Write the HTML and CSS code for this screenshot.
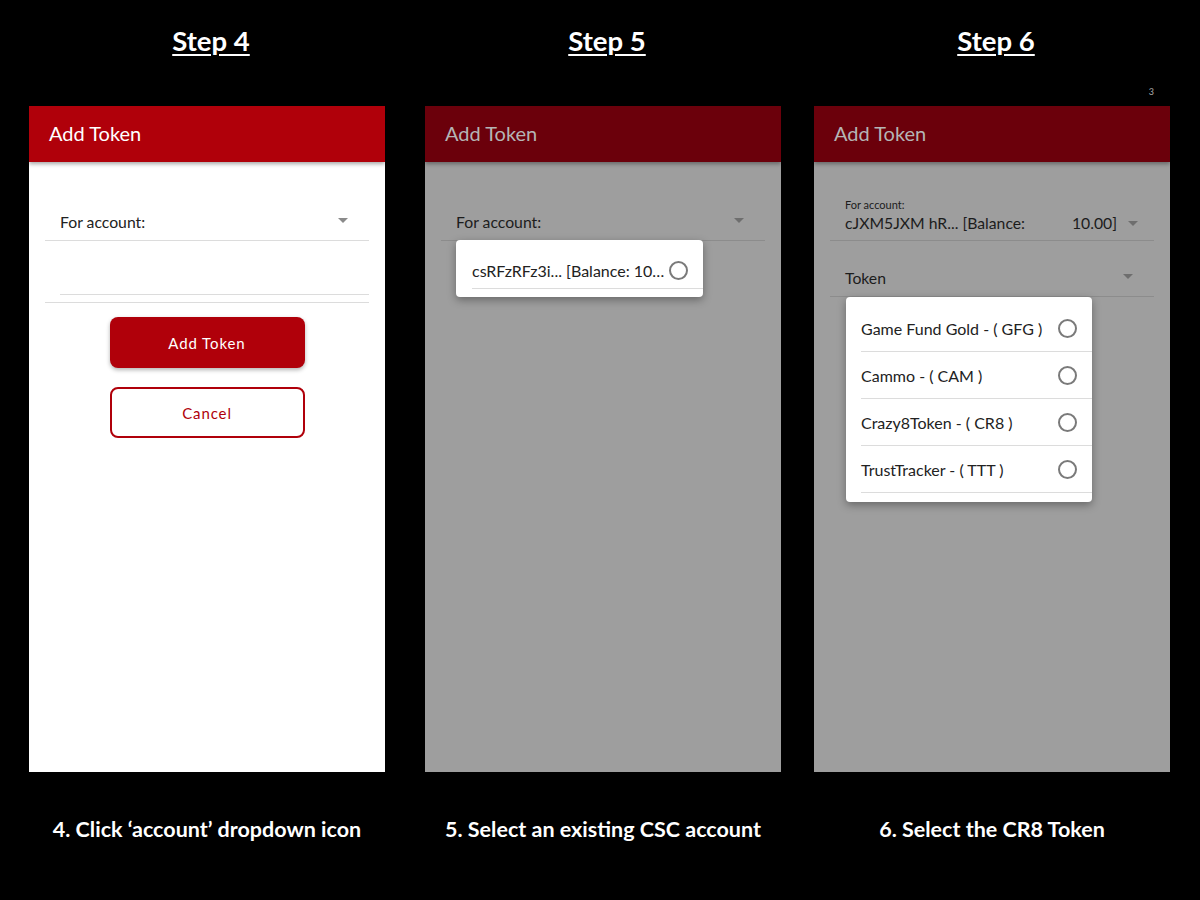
FILE: index.html
```html
<!DOCTYPE html>
<html>

<head>
    <title>Add Token - Steps 4 to 6</title>
    <meta charset="UTF-8">
    <meta name="viewport" content="width=device-width, initial-scale=1.0">
    <link rel="stylesheet" href="styles.css">
</head>

<body>
    <main class="steps">
        <!-- step 4: empty form -->
        <section class="step">
            <div class="step-head"><h2>Step 4</h2></div>
            <div class="phone">
                <header class="app-bar">Add Token</header>
                <div class="app-body">
                    <div class="field">
                        <span class="field-label">For account:</span>
                        <span class="caret"></span>
                    </div>
                    <div class="field-input"></div>
                    <div class="rule"></div>
                    <button class="btn btn-primary">Add Token</button>
                    <button class="btn btn-outline">Cancel</button>
                </div>
            </div>
            <p class="caption">4. Click &lsquo;account&rsquo; dropdown icon</p>
        </section>

        <!-- step 5: account picker open -->
        <section class="step">
            <div class="step-head"><h2>Step 5</h2></div>
            <div class="phone dimmed">
                <header class="app-bar">Add Token</header>
                <div class="app-body">
                    <div class="field">
                        <span class="field-label">For account:</span>
                        <span class="caret"></span>
                    </div>
                    <ul class="menu menu-account">
                        <li>
                            <span class="menu-text">csRFzRFz3i... [Balance: 10&hellip;</span>
                            <span class="radio"></span>
                        </li>
                    </ul>
                </div>
            </div>
            <p class="caption">5. Select an existing CSC account</p>
        </section>

        <!-- step 6: token picker open -->
        <section class="step step-last">
            <div class="step-head">
                <h2>Step 6</h2>
                <span class="corner-mark">3</span>
            </div>
            <div class="phone dimmed">
                <header class="app-bar">Add Token</header>
                <div class="app-body">
                    <div class="field field-filled">
                        <span class="field-small">For account:</span>
                        <div class="field-value">
                            <span>cJXM5JXM hR... [Balance:</span>
                            <span class="value-end">10.00]</span>
                            <span class="caret"></span>
                        </div>
                    </div>
                    <div class="field field-token">
                        <span class="field-label">Token</span>
                        <span class="caret"></span>
                    </div>
                    <ul class="menu menu-token">
                        <li><span class="menu-text">Game Fund Gold - ( GFG )</span><span class="radio"></span></li>
                        <li><span class="menu-text">Cammo - ( CAM )</span><span class="radio"></span></li>
                        <li><span class="menu-text">Crazy8Token - ( CR8 )</span><span class="radio"></span></li>
                        <li><span class="menu-text">TrustTracker - ( TTT )</span><span class="radio"></span></li>
                    </ul>
                </div>
            </div>
            <p class="caption">6. Select the CR8 Token</p>
        </section>
    </main>
</body>

</html>
```

FILE: styles.css
```css
body {
    margin: 0;
    padding: 0;
    background-color: #000;
    font-family: Lato, "Open Sans", sans-serif;
}

.steps {
    display: flex;
    padding-left: 29px;
    width: 1200px;
    height: 900px;
    box-sizing: border-box;
}

.step {
    width: 356px;
    display: flex;
    flex-direction: column;
}

.step + .step {
    margin-left: 40px;
}

.step.step-last {
    margin-left: 33px;
}

.step-head {
    position: relative;
    height: 106px;
    text-align: center;
}

.step-head h2 {
    margin: 0;
    padding-top: 24px;
    padding-left: 8px;
    color: #fff;
    font-size: 27.5px;
    font-weight: 700;
    text-decoration: underline;
    text-underline-offset: 3px;
    text-decoration-thickness: 2px;
    line-height: 34px;
}

.corner-mark {
    position: absolute;
    right: 16px;
    top: 86px;
    color: #aaa;
    font-size: 9px;
}

.caption {
    margin: 0;
    padding-top: 43px;
    color: #fff;
    text-align: center;
    font-size: 21.5px;
    font-weight: 700;
    line-height: 28px;
}

/* phone screen */

.phone {
    height: 666px;
    background-color: #fff;
    display: flex;
    flex-direction: column;
}

.app-bar {
    height: 56px;
    flex-shrink: 0;
    background-color: #b0000a;
    color: #fff;
    font-size: 20px;
    padding-left: 20px;
    padding-bottom: 2px;
    box-sizing: border-box;
    display: flex;
    align-items: center;
    box-shadow: 0 2px 4px rgba(0, 0, 0, 0.35);
    position: relative;
    z-index: 1;
}

.app-body {
    position: relative;
    flex: 1;
    padding: 0 16px;
    display: flex;
    flex-direction: column;
}

.field {
    margin-top: 38px;
    height: 40px;
    border-bottom: 1px solid #dcdcdc;
    display: flex;
    align-items: center;
    padding: 0 21px 0 15px;
    color: #222;
    font-size: 15.75px;
}

.field-label {
    flex: 1;
    padding-top: 3px;
}

.caret {
    width: 0;
    height: 0;
    border-left: 5px solid transparent;
    border-right: 5px solid transparent;
    border-top: 5px solid #8a8a8a;
}

.field-input {
    margin-left: 15px;
    height: 53px;
    border-bottom: 1px solid #dcdcdc;
}

.rule {
    margin-top: 7px;
    height: 1px;
    background-color: #dcdcdc;
}

.btn {
    align-self: center;
    width: 195px;
    border-radius: 8px;
    font-family: Lato, sans-serif;
    font-size: 15px;
    letter-spacing: 0.9px;
    cursor: pointer;
}

.btn-primary {
    margin-top: 14px;
    height: 51px;
    border: none;
    background-color: #b0000a;
    color: #fff;
    box-shadow: 0 2px 4px rgba(0, 0, 0, 0.3);
}

.btn-outline {
    margin-top: 19px;
    height: 51px;
    border: 2px solid #b0000a;
    background-color: #fff;
    color: #b0000a;
}

/* dimmed screens behind an open picker */

.phone.dimmed {
    background-color: #9e9e9e;
}

.dimmed .app-bar {
    background-color: #6b000b;
    color: #b5b5b5;
}

.dimmed .field {
    border-bottom-color: #8c8c8c;
    color: #1c1c1c;
}

.dimmed .caret {
    border-top-color: #6e6e6e;
}

.field-filled {
    margin-top: 30px;
    height: 48px;
    flex-direction: column;
    align-items: stretch;
    justify-content: center;
    padding-right: 16px;
}

.field-small {
    font-size: 11px;
    line-height: 14px;
}

.field-value {
    display: flex;
    align-items: center;
    font-size: 15.75px;
    line-height: 22px;
}

.value-end {
    margin-left: auto;
    margin-right: 11px;
}

.field-token {
    margin-top: 15px;
    height: 40px;
    padding-right: 21px;
}

.menu {
    position: absolute;
    list-style: none;
    margin: 0;
    padding: 0;
    background-color: #fff;
    border-radius: 4px;
    box-shadow: 0 3px 8px rgba(0, 0, 0, 0.35);
    z-index: 2;
}

.menu li {
    display: flex;
    align-items: center;
    color: #222;
    font-size: 16px;
    border-bottom: 1px solid #dcdcdc;
}

.menu-text {
    flex: 1;
    white-space: nowrap;
}

.radio {
    width: 15px;
    height: 15px;
    border: 2px solid #7a7a7a;
    border-radius: 50%;
}

.menu-account {
    left: 31px;
    top: 78px;
    width: 247px;
    height: 57px;
    padding-top: 12px;
    box-sizing: border-box;
}

.menu-account li {
    margin-left: 16px;
    height: 36px;
    padding-right: 15px;
}

.menu-token {
    left: 32px;
    top: 135px;
    width: 246px;
    height: 205px;
    padding-top: 8px;
    box-sizing: border-box;
}

.menu-token li {
    margin-left: 15px;
    height: 46px;
    padding-right: 15px;
}
```
